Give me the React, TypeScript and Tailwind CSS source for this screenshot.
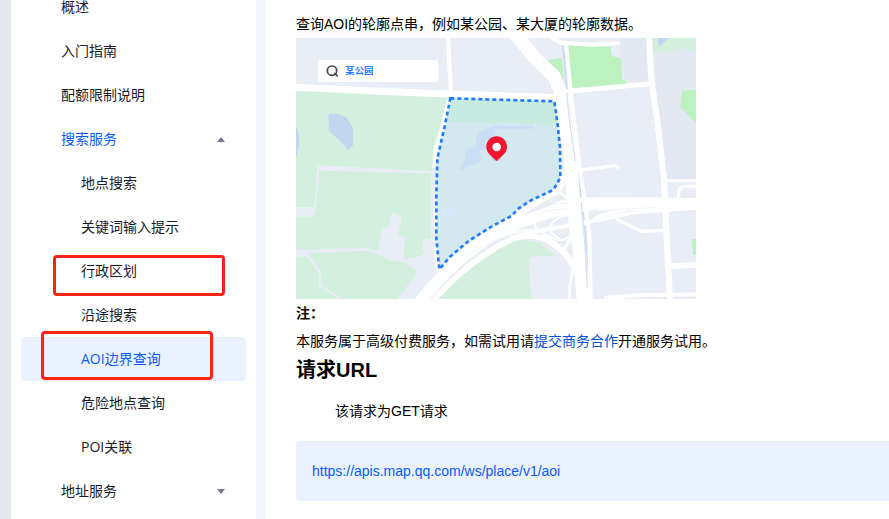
import React from 'react';
import clsx from 'clsx';

type NavItem = {
  label: string;
  child?: boolean;
  active?: boolean;
  open?: boolean;
  group?: boolean;
  mark?: string;
};

const navItems: NavItem[] = [
  { label: '概述' },
  { label: '入门指南' },
  { label: '配额限制说明' },
  { label: '搜索服务', group: true, open: true },
  { label: '地点搜索', child: true },
  { label: '关键词输入提示', child: true },
  { label: '行政区划', child: true, mark: 'left-8 top-1.5 h-[41px] w-[172px]' },
  { label: '沿途搜索', child: true },
  { label: 'AOI边界查询', child: true, active: true, mark: 'left-5 -top-1.5 h-[49px] w-[172px]' },
  { label: '危险地点查询', child: true },
  { label: 'POI关联', child: true },
  { label: '地址服务', group: true },
];

function Caret({ open }: { open?: boolean }) {
  return (
    <svg viewBox="0 0 8 5" className="h-[5px] w-2 shrink-0 fill-[#717a91]" aria-hidden="true">
      <path d={open ? 'M4 0 8 5H0Z' : 'M0 0H8L4 5Z'} />
    </svg>
  );
}

function Sidebar() {
  return (
    <nav className="w-[245px] shrink-0 bg-white px-2.5 font-['Noto_Sans_CJK_SC',sans-serif] leading-none">
      <ul className="-mt-[15px]">
        {navItems.map((item) => {
          const rowClass = clsx(
            "flex h-11 w-full items-center justify-between rounded pr-[21px] text-left font-['Open_Sans','Noto_Sans_CJK_SC',sans-serif]",
            item.child ? 'pl-[60px]' : 'pl-10',
            item.active && 'bg-[#eaf1ff]',
            item.active || item.open ? 'text-[#0a5cff]' : 'text-[#181c2a]'
          );
          return (
            <li key={item.label} className="relative">
              {item.group ? (
                <button type="button" aria-expanded={!!item.open} className={rowClass}>
                  {item.label}
                  <Caret open={item.open} />
                </button>
              ) : (
                <a href="#" className={rowClass}>
                  {item.label}
                </a>
              )}
              {item.mark && (
                <span
                  className={clsx(
                    'pointer-events-none absolute z-10 rounded border-3 border-[#fb2216]',
                    item.mark
                  )}
                />
              )}
            </li>
          );
        })}
      </ul>
    </nav>
  );
}

// Park outline, drawn once as fill and dashed border
const parkOutline =
  'M463 181 L775 190 L785 260 L792 330 L793 415 Q786 438 769 457 L705 487 L668 511 L646 534 L582 568 L518 609 L462 656 L430 694 L421 600 L421 470 L424 362 L446 265Z';

function AoiMap() {
  return (
    <svg
      viewBox="0 0 1200 783"
      className="block aspect-[400/261] w-full max-w-[400px] bg-[#e9eef6]"
      role="img"
      aria-label="AOI轮廓示例"
    >
      {/* Blocks */}
      <path fill="#e2e9f2" d="M975 0H1058L1068 135L985 130L972 60Z M1070 0H1200V425H1115L1085 220Z" />

      {/* Green areas */}
      <path fill="#d3efde" d="M0 155L455 178L418 320L410 400L64 382L54 507H0Z" />
      <path
        fill="#d3efde"
        d="M70 398L405 406L404 600L384 602L378 632L386 650L324 664L326 600L306 592L317 534L287 524L276 568L261 571L245 637L210 630L0 635V536L52 536Q60 530 62 500Z"
      />
      <path fill="#d3efde" d="M0 657L32 655L68 704L70 745L128 783H0Z" />
      <path fill="#d3efde" d="M36 645L220 638L286 668L328 673L366 702L304 783H132L123 772L76 742L74 700Z" />
      <path fill="#d3efde" d="M420 783Q520 660 640 612Q690 598 730 615L780 653L708 656Q698 660 698 680L706 783Z" />
      <path fill="#bdf1bf" d="M811 21L944 27L948 54L975 60L978 122L990 130L986 138L822 151Z" />
      <path fill="#bdf1bf" d="M757 66L797 59L806 154L790 130Z" />
      <path fill="#bdf1bf" d="M1157 157H1200V255L1153 208Z M1187 603H1200V651H1192Z" />
      <path fill="#d3efde" d="M1068 0H1200V39L1142 29L1136 39L1071 46Z" />

      {/* Water */}
      <path fill="#c2d6ef" d="M98 228L126 227L151 238L171 269V322L154 337L145 320L98 278Z" />
      <path fill="#c2d6ef" d="M0 265Q20 306 0 358Z M1084 0H1118L1101 15L1090 28Z" />
      <path fill="none" stroke="#cbdcef" strokeWidth="6" d="M801 15L815 190L839 365L858 490L870 620L877 783" />

      {/* Park */}
      <path fill="#d3e9ef" d={parkOutline} />
      <path fill="#c7ebe0" d="M463 181L775 190L787 264L680 256L450 252Z" />
      <path
        fill="#cbdef8"
        d="M590 263H714V272H606L596 284L600 300L575 330L550 338L557 362L544 378L523 380L495 397L490 391L508 366L506 335L520 330L542 328L540 296L560 276Z"
      />
      <path fill="#dae6fb" d="M422 511H476V535H422Z" />

      {/* Roads */}
      <g fill="none" stroke="#ffffff" strokeLinejoin="round">
        <path strokeWidth="21" d="M0 148L300 162L460 168L790 179" />
        <path strokeWidth="13" d="M456 0L465 165" />
        <path strokeWidth="12" d="M458 185L440 265L420 328L415 390" />
        <path strokeWidth="10" d="M418 510V570M417 625L425 700" />
        <path strokeWidth="40" d="M656 -15L720 64L775 115L798 175L806 245L825 370L832 500L850 640L862 783" />
        <path strokeWidth="12" d="M767 0L796 14L885 20L970 16M810 15L825 170L850 380L880 590L884 783" />
        <path strokeWidth="14" d="M790 163L880 154L1060 138" />
        <path strokeWidth="18" d="M1060 0L1065 115L1084 250L1104 420L1112 600L1122 783" />
        <path strokeWidth="10" d="M850 397L958 382L970 390M1110 428H1200M1148 482V460Q1150 445 1168 445H1200" />
        <path strokeWidth="34" d="M360 805Q480 650 620 577Q720 528 850 504L1020 495L1200 498" />
        <path strokeWidth="18" d="M395 805Q510 670 650 602Q710 580 765 612Q840 660 862 760" />
        <path strokeWidth="18" d="M430 705L525 622L650 542L712 499L780 462Q804 444 805 395" />
        <path strokeWidth="13" d="M560 610Q640 580 730 578L870 553L1020 522L1200 508" />
        <path strokeWidth="16" d="M830 486L1200 488M850 510L1200 507" />
        <path strokeWidth="9" d="M780 455L820 485M735 520L800 490H850M700 550Q740 505 850 495" />
        <path strokeWidth="7" d="M712 545L720 570L750 592L785 606Q807 608 822 593M830 530Q768 535 763 570Q761 588 792 602" />
        <path strokeWidth="10" d="M825 540L825 600L802 636M885 550Q920 525 990 515" />
        <path strokeWidth="10" d="M960 544L1037 580L1105 577" />
        <path strokeWidth="17" d="M1120 685L1200 680" />
        <path strokeWidth="12" d="M925 780L1040 771L1200 769" />
        <path strokeWidth="8" d="M830 690L822 740L820 783" />
      </g>

      {/* Lane edges on the ring road */}
      <g fill="none" stroke="#e9eef6" strokeWidth="2">
        <path d="M408 783Q500 670 630 597Q720 565 805 560" />
        <path d="M510 654Q590 604 655 586M740 522Q770 513 820 512" />
        <path d="M735 497H820M880 517L1080 509" />
      </g>
      <path fill="none" stroke="#d5e2f2" strokeWidth="4" d="M812 165L822 260L838 370M856 490L867 620L874 750" />

      <path fill="none" stroke="#207dff" strokeWidth="8" strokeDasharray="12 9" d={parkOutline} />

      {/* Pin */}
      <ellipse cx="602" cy="362" rx="13" ry="7" fill="#b7cfd7" />
      <path fill="#f91432" d="M602 295C584 295 571 309 571 327C571 347 588 354 602 369C616 354 633 347 633 327C633 309 620 295 602 295Z" />
      <circle cx="602" cy="327" r="13" fill="#ffffff" />

      {/* Search box */}
      <rect x="66" y="66" width="362" height="66" rx="10" fill="#ffffff" />
      <circle cx="108" cy="98" r="14" fill="none" stroke="#414548" strokeWidth="5" />
      <path stroke="#414548" strokeWidth="5" d="M115 105L125 115" />
      <text x="148" y="109" fontSize="28" className="fill-[#2680ff] font-['Noto_Sans_CJK_SC',sans-serif] font-bold">
        某公园
      </text>
    </svg>
  );
}

export default function App() {
  return (
    <div className="flex min-h-screen overflow-hidden bg-[#f4f6fb] text-sm">
      <div className="w-[11px] shrink-0 bg-[#e7e8ee]" />
      <Sidebar />

      {/* Document */}
      <main className="ml-2.5 min-w-0 flex-1 bg-white pt-2.5 pl-[30px] font-['Liberation_Sans','Noto_Sans_CJK_SC',sans-serif] text-black">
        <p className="leading-7">查询AOI的轮廓点串，例如某公园、某大厦的轮廓数据。</p>
        <AoiMap />
        <p className="leading-7 font-bold">注：</p>
        <p className="leading-7">
          本服务属于高级付费服务，如需试用请
          <a href="#" className="text-[#0052d9]">提交商务合作</a>
          开通服务试用。
        </p>
        <h2 className="text-xl leading-[30px] font-bold">请求URL</h2>
        <p className="mt-3 pl-[39px] leading-7">该请求为GET请求</p>
        <div className="mt-4 rounded-l-sm bg-[#eaf1ff] p-4 leading-7">
          <a href="https://apis.map.qq.com/ws/place/v1/aoi" className="text-[#0a5cff]">
            https://apis.map.qq.com/ws/place/v1/aoi
          </a>
        </div>
      </main>
    </div>
  );
}
